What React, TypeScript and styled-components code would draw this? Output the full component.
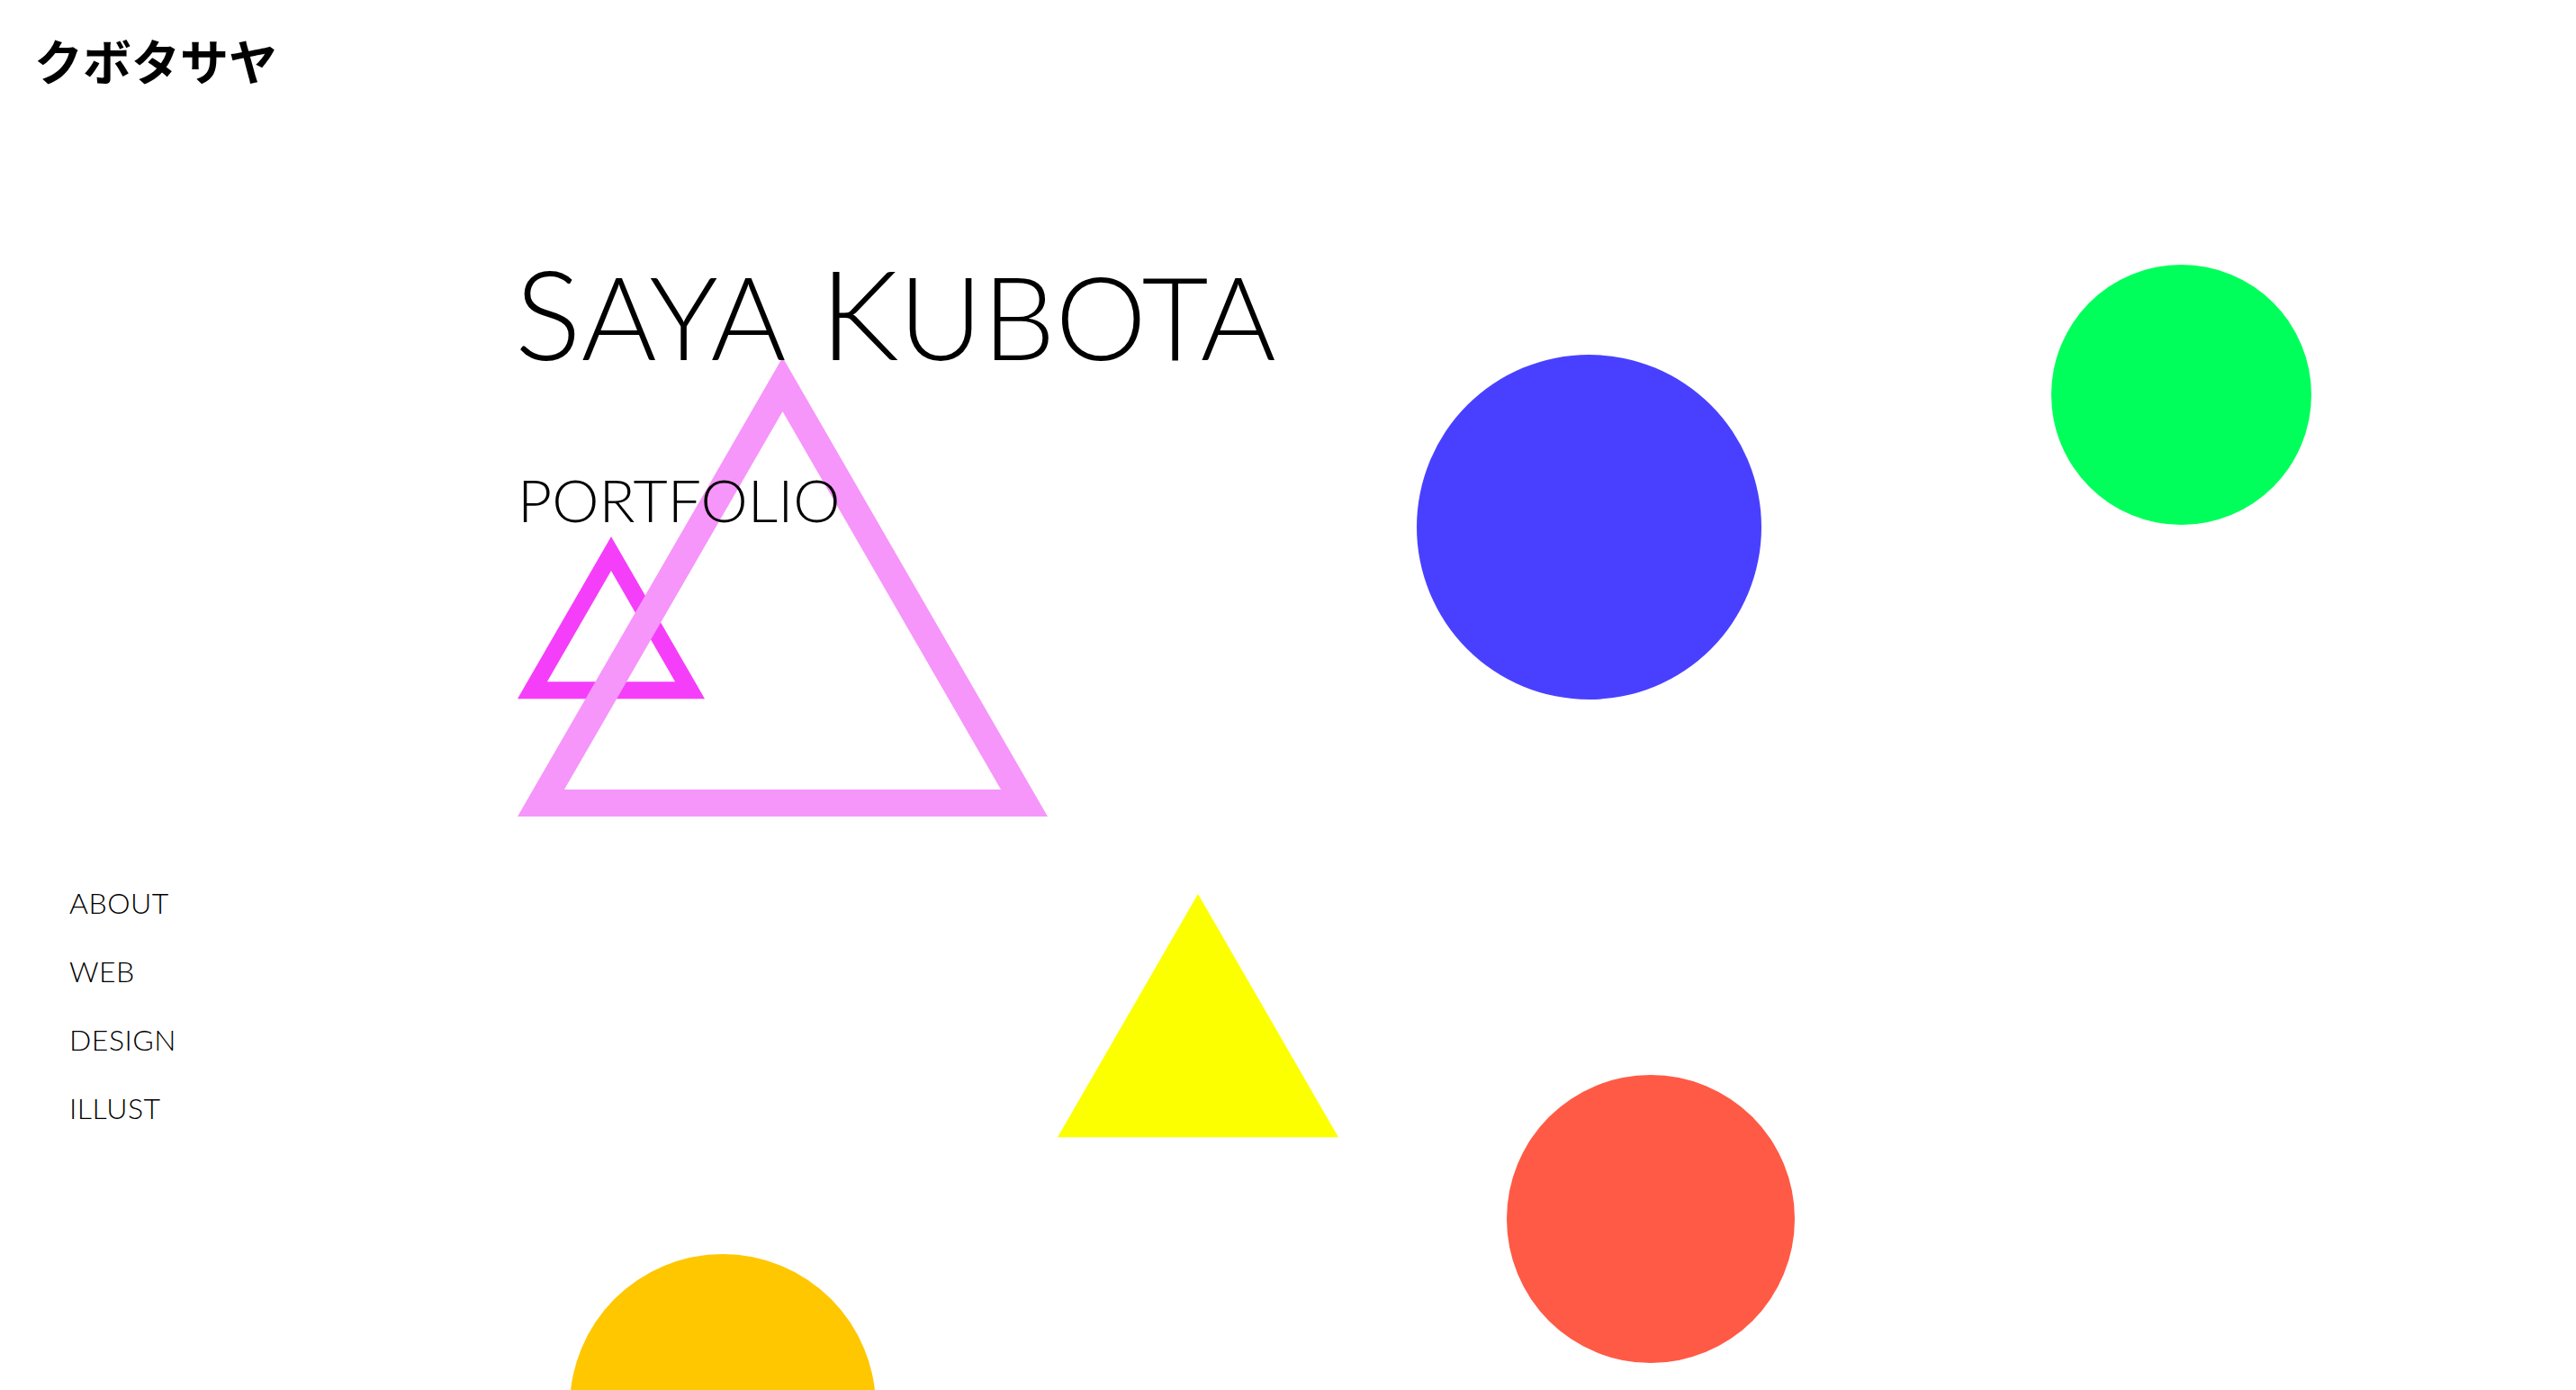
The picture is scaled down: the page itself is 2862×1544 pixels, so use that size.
import React from "react";
import styled, { createGlobalStyle } from "styled-components";

const GlobalStyle = createGlobalStyle`
  html, body {
    margin: 0;
    padding: 0;
    background: #ffffff;
  }
  body {
    font-family: "Lato", "Open Sans", sans-serif;
    color: #000000;
  }
`;

const Page = styled.div`
  position: relative;
  width: 100%;
  height: 1544px;
  overflow: hidden;
  background: #ffffff;
`;

const Canvas = styled.div`
  position: absolute;
  inset: 0;
  z-index: 0;
  pointer-events: none;
`;

const Content = styled.div`
  position: relative;
  z-index: 1;
  display: flex;
  flex-direction: column;
`;

const Header = styled.header`
  padding: 40px 0 0 38px;
`;

const Logo = styled.div`
  font-family: "Noto Sans CJK JP", "Noto Sans CJK SC", sans-serif;
  font-weight: 700;
  font-size: 54px;
  line-height: 1;
  letter-spacing: 0;
`;

const Hero = styled.section`
  display: flex;
  flex-direction: column;
  gap: 106px;
  padding-left: 572px;
  margin-top: 184px;
`;

const Title = styled.h1`
  margin: 0;
  font-family: "Lato", sans-serif;
  font-weight: 300;
  font-size: 138px;
  line-height: 1;
  letter-spacing: 0;
  text-transform: uppercase;
  white-space: nowrap;
`;

const Small = styled.span`
  font-size: 128px;
`;

const Subtitle = styled.h2`
  margin: 0 0 0 3px;
  font-family: "Lato", sans-serif;
  font-weight: 300;
  font-size: 66px;
  line-height: 1;
  letter-spacing: 0;
  text-transform: uppercase;
`;

const Nav = styled.nav`
  display: flex;
  flex-direction: column;
  gap: 44px;
  padding-left: 77px;
  margin-top: 399px;
`;

const NavLink = styled.a`
  font-family: "Lato", sans-serif;
  font-weight: 300;
  font-size: 32px;
  line-height: 1;
  letter-spacing: 0.5px;
  color: #000000;
  text-decoration: none;
  text-transform: uppercase;
`;

const Circle = styled.div<{ $x: number; $y: number; $d: number; $color: string }>`
  position: absolute;
  left: ${(p) => p.$x}px;
  top: ${(p) => p.$y}px;
  width: ${(p) => p.$d}px;
  height: ${(p) => p.$d}px;
  border-radius: 50%;
  background: ${(p) => p.$color};
`;

const TriangleSvg = styled.svg<{ $x: number; $y: number }>`
  position: absolute;
  left: ${(p) => p.$x}px;
  top: ${(p) => p.$y}px;
  overflow: visible;
`;

type TriProps = {
  x: number;
  y: number;
  side: number;
  color: string;
  band?: number;
};

const Triangle: React.FC<TriProps> = ({ x, y, side, color, band }) => {
  const h = (side * Math.sqrt(3)) / 2;
  const outer = `M${side / 2} 0 L${side} ${h} L0 ${h} Z`;
  let d = outer;
  if (band) {
    const innerSide = side - 2 * Math.sqrt(3) * band;
    const by = h - band;
    const ay = 2 * band;
    const lx = side / 2 - innerSide / 2;
    const rx = side / 2 + innerSide / 2;
    d += ` M${side / 2} ${ay} L${lx} ${by} L${rx} ${by} Z`;
  }
  return (
    <TriangleSvg $x={x} $y={y} width={side} height={h} viewBox={`0 0 ${side} ${h}`}>
      <path d={d} fill={color} fillRule="evenodd" />
    </TriangleSvg>
  );
};

const navItems = ["About", "Web", "Design", "Illust"];

export default function App() {
  return (
    <>
      <GlobalStyle />
      <Page>
        <Canvas>
          <Circle $x={1574} $y={394} $d={383} $color="#4940ff" />
          <Circle $x={2279} $y={294} $d={289} $color="#00ff5a" />
          <Circle $x={1674} $y={1194} $d={320} $color="#ff5a45" />
          <Circle $x={633} $y={1393} $d={340} $color="#ffc700" />
          <Triangle x={1175} y={993} side={312} color="#fbff00" />
          <Triangle x={575} y={596} side={208} color="#f53efa" band={19} />
          <Triangle x={575} y={397} side={589} color="#f695fa" band={30} />
        </Canvas>
        <Content>
          <Header>
            <Logo>クボタサヤ</Logo>
          </Header>
          <Hero>
            <Title>
              S<Small>aya</Small> K<Small>ubota</Small>
            </Title>
            <Subtitle>Portfolio</Subtitle>
          </Hero>
          <Nav>
            {navItems.map((item) => (
              <NavLink key={item} href="#">
                {item}
              </NavLink>
            ))}
          </Nav>
        </Content>
      </Page>
    </>
  );
}
